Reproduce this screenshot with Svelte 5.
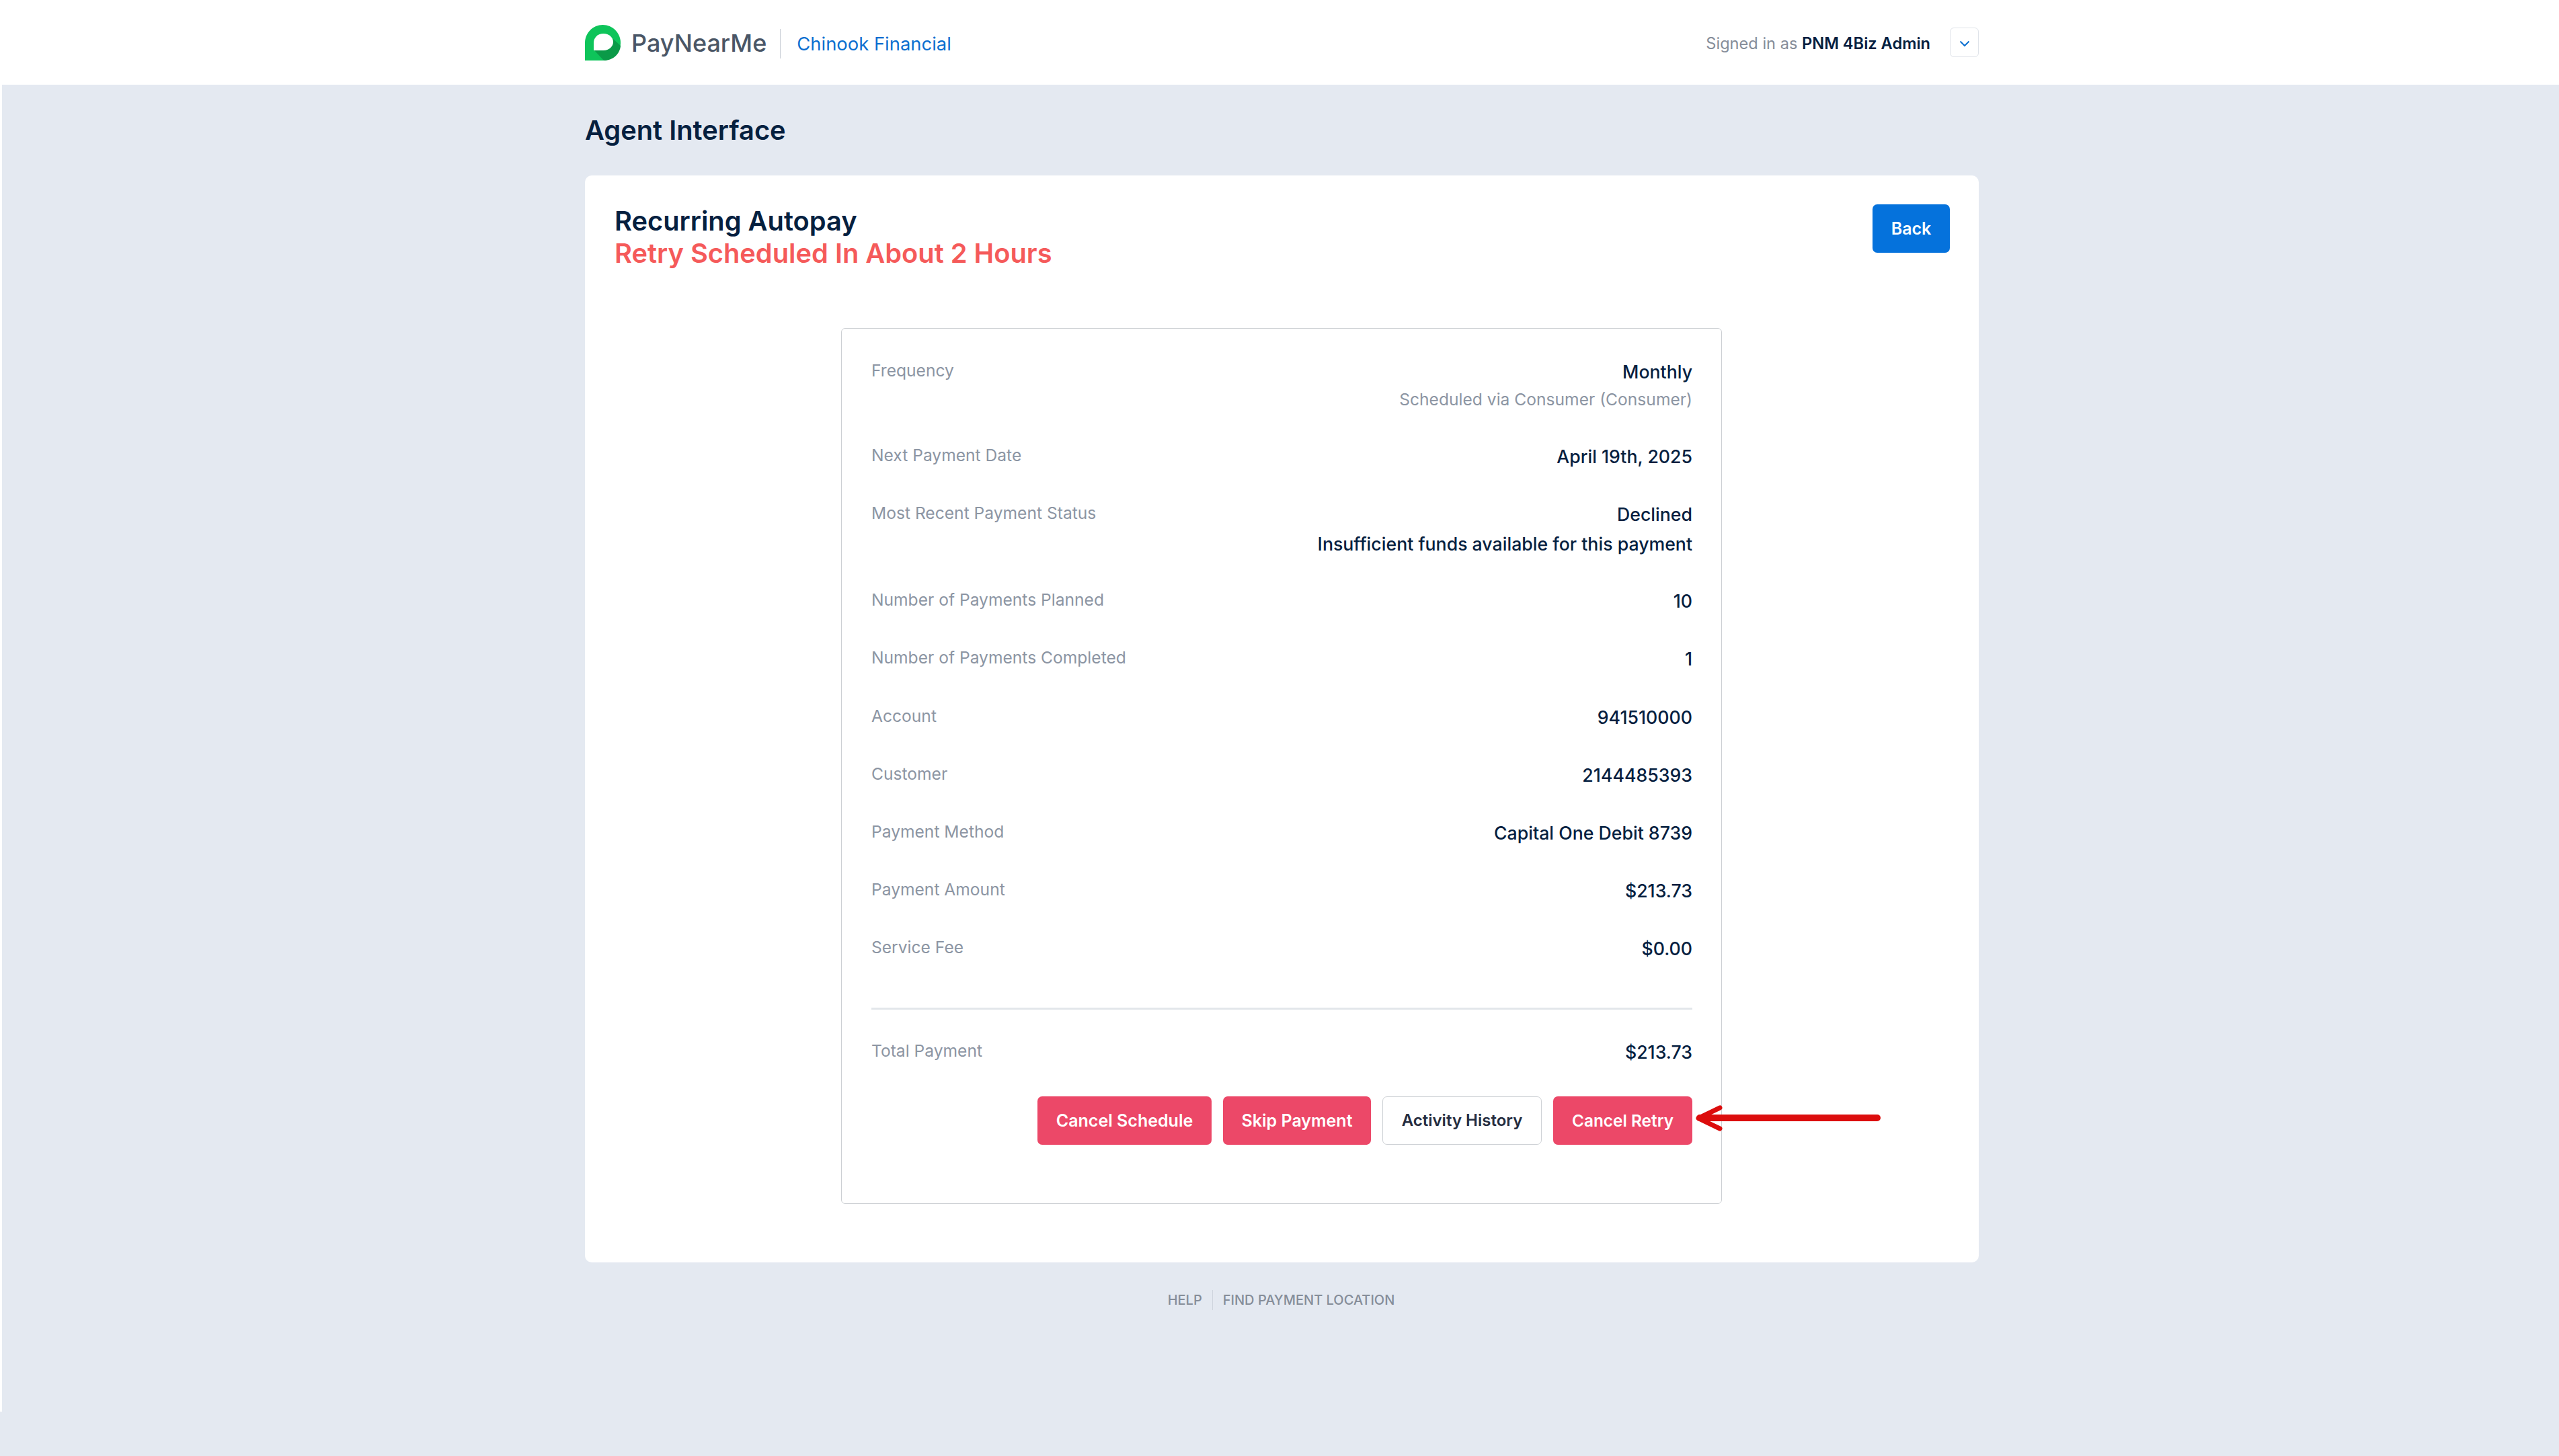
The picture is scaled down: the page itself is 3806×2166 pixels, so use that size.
<script>
  const rows = [
    { label: 'Next Payment Date', value: 'April 19th, 2025' },
  ];
  const status = { label: 'Most Recent Payment Status', lines: ['Declined', 'Insufficient funds available for this payment'] };
  const plain = [
    ['Number of Payments Planned', '10'],
    ['Number of Payments Completed', '1'],
    ['Account', '941510000'],
    ['Customer', '2144485393'],
    ['Payment Method', 'Capital One Debit 8739'],
    ['Payment Amount', '$213.73'],
    ['Service Fee', '$0.00'],
  ];
</script>

<div class="shell">
  <header class="top">
    <div class="top-in">
      <div class="brand">
        <svg class="logo" viewBox="0 0 54 54" aria-hidden="true">
          <path d="M0 53V26.500C0 12 12 0 26.500 0S53 12 53 26.500 41 53 26.500 53Z" fill="#0ec45a"/>
          <path d="M14 38 28 53C42 53 52 43 53 31L42 21Z" fill="#0b9a48"/>
          <path d="M13 38V26.500C13 19 19 13 27.500 13S42 19 42 25.500 36 38 27.500 38Z" fill="#fff"/>
        </svg>
        <span class="word">PayNearMe</span>
        <span class="org">Chinook Financial</span>
      </div>
      <div class="user">
        <span class="signed">Signed in as <b>PNM 4Biz Admin</b></span>
        <span class="caret">
          <svg viewBox="0 0 16 10" width="16" height="10" aria-hidden="true"><path d="M1.500 1.500 8 8l6.500-6.500" fill="none" stroke="#0b6fd0" stroke-width="2"/></svg>
        </span>
      </div>
    </div>
  </header>

  <main class="main">
    <div class="wrap">
      <h1>Agent Interface</h1>
      <section class="card">
        <div class="card-head">
          <h2>Recurring Autopay<br /><span class="retry">Retry Scheduled In About 2 Hours</span></h2>
          <button class="btn back">Back</button>
        </div>
        <div class="panel">
          <div class="row first">
            <span class="lbl">Frequency</span>
            <div class="val">Monthly<div class="sub">Scheduled via Consumer (Consumer)</div></div>
          </div>
          {#each rows as r}
            <div class="row"><span class="lbl">{r.label}</span><div class="val">{r.value}</div></div>
          {/each}
          <div class="row tall">
            <span class="lbl">{status.label}</span>
            <div class="val">{#each status.lines as l}<div>{l}</div>{/each}</div>
          </div>
          {#each plain as p}
            <div class="row"><span class="lbl">{p[0]}</span><div class="val">{p[1]}</div></div>
          {/each}
          <hr />
          <div class="row total"><span class="lbl">Total Payment</span><div class="val">$213.73</div></div>
          <div class="actions">
            <button class="btn red w-schedule">Cancel Schedule</button>
            <button class="btn red w-skip">Skip Payment</button>
            <button class="btn ghost w-history">Activity History</button>
            <button class="btn red w-retry">Cancel Retry</button>
            <svg class="arrow" viewBox="0 0 285 50" aria-hidden="true">
              <path d="M272 24H8" fill="none" stroke="#dc0d0d" stroke-width="10" stroke-linecap="round"/>
              <path d="M38 9 6 24.500 38 40" fill="none" stroke="#dc0d0d" stroke-width="7" stroke-linecap="round" stroke-linejoin="round"/>
            </svg>
          </div>
        </div>
      </section>
      <footer class="foot">
        <span>Help</span><i></i><span>Find Payment Location</span>
      </footer>
    </div>
  </main>
</div>

<style>
  :global(body) {
    margin: 0;
    background: #e4e9f1;
    font-family: Inter, Lato, sans-serif;
    color: #05203f;
  }
  .shell { height: 2100px; background: #fff; }
  .top { height: 126px; background: #fff; }
  .top-in {
    width: 2073px;
    margin-left: 870px;
    height: 100%;
    display: flex;
    justify-content: space-between;
    align-items: center;
  }
  .brand { display: flex; align-items: center; }
  .logo { width: 54px; height: 54px; margin-top: 2px; }
  .word {
    margin-left: 15px;
    padding-right: 20px;
    font-size: 36px;
    font-weight: 500;
    color: #4a5666;
    margin-top: 2px;
  }
  .org {
    padding: 5px 0 5px 24px;
    border-left: 1px solid #c9ced6;
    font-size: 27.400px;
    line-height: 34px;
    color: #0b6fd0;
    margin-top: 3px;
  }
  .user { display: flex; align-items: center; gap: 29px; }
  .signed { font-size: 23.600px; color: #858d99; margin-top: 2px; }
  .signed b { font-weight: 600; color: #05203f; }
  .caret {
    width: 43px;
    height: 44px;
    border: 1px solid #dfe3e9;
    border-radius: 6px;
    display: flex;
    align-items: center;
    justify-content: center;
    padding-top: 4px;
    box-sizing: border-box;
  }
  .main { margin-left: 3px; background: #e4e9f1; height: 1974px; }
  .wrap { width: 2073px; margin-left: 867px; }
  h1 {
    margin: 0;
    padding-top: 43px;
    height: 92px;
    font-size: 39.800px;
    line-height: 50px;
    font-weight: 600;
  }
  .card {
    background: #fff;
    border-radius: 10px;
    height: 1617px;
    padding: 44px 43px 0 44px;
    box-sizing: border-box;
  }
  .card-head { display: flex; justify-content: space-between; align-items: flex-start; height: 183px; }
  h2 { margin: 0; font-size: 39.800px; line-height: 48px; font-weight: 600; }
  .retry { color: #f55a5a; }
  .btn {
    height: 72px;
    border: 0;
    border-radius: 7px;
    font-family: inherit;
    font-size: 25px;
    font-weight: 600;
    color: #fff;
    padding: 0;
    box-sizing: border-box;
  }
  .back { background: #0572dc; width: 115px; margin-top: -1px; }
  .red { background: #ec4868; }
  .ghost { background: #fff; border: 1px solid #cfd2d6; color: #252d3f; font-size: 24px; }
  .w-schedule { width: 259px; }
  .w-skip { width: 220px; }
  .w-history { width: 237px; }
  .w-retry { width: 207px; font-size: 24.400px; }
  .panel {
    width: 1310px;
    height: 1303px;
    margin-left: 337px;
    border: 1.500px solid #cdd0d4;
    border-radius: 6px;
    padding: 42px 43px 44px 44px;
    box-sizing: border-box;
  }
  .row { display: flex; justify-content: space-between; align-items: flex-start; height: 86.200px; }
  .row.first { height: 126px; }
  .row.tall { height: 129px; }
  .lbl { font-size: 24.600px; line-height: 41px; color: #8c95a3; }
  .val { font-size: 26.700px; line-height: 44px; font-weight: 500; text-align: right; }
  .sub { font-size: 24.600px; line-height: 38px; color: #8c95a3; font-weight: 400; }
  hr { border: 0; height: 3px; background: #e3e6ea; margin: 23.400px 0 41px; }
  .total { height: 88px; }
  .actions { display: flex; justify-content: flex-end; gap: 17px; position: relative; }
  .arrow { position: absolute; left: 100%; top: 8px; margin-left: 3px; width: 285px; height: 50px; }
  .foot {
    display: flex;
    justify-content: center;
    align-items: center;
    margin-top: 41px;
    margin-left: -2px;
    gap: 15px;
    font-size: 20px;
    font-weight: 500;
    text-transform: uppercase;
    color: #858d99;
  }
  .foot i { width: 1px; height: 30px; background: #cfd5de; }
</style>
